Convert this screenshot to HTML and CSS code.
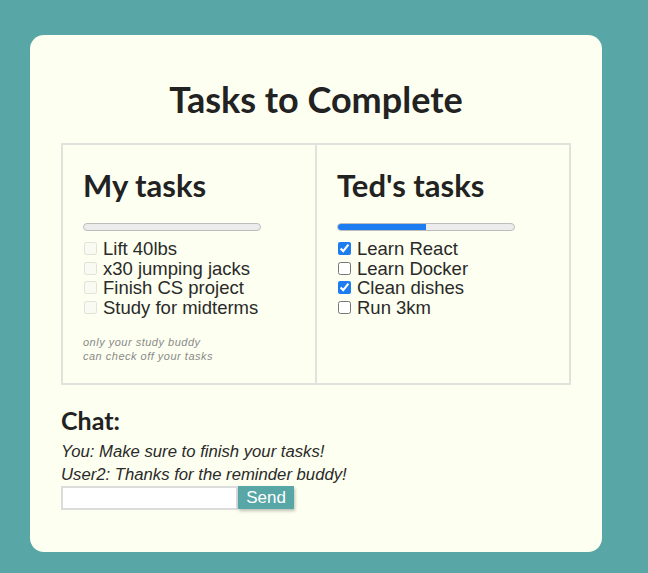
FILE: index.html
```html
<!DOCTYPE html>
<html lang="en">
<head>
  <meta charset="UTF-8">
  <title>Tasks to Complete</title>
  <link rel="stylesheet" href="styles.css">
</head>
<body>

  <div class="card">
    <h1>Tasks to Complete</h1>

    <div class="lists">
      <div class="list">
        <h2>My tasks</h2>
        <div class="bar"><div class="bar-fill" style="width: 0%"></div></div>
        <label class="task"><input type="checkbox" disabled> Lift 40lbs</label>
        <label class="task"><input type="checkbox" disabled> x30 jumping jacks</label>
        <label class="task"><input type="checkbox" disabled> Finish CS project</label>
        <label class="task"><input type="checkbox" disabled> Study for midterms</label>
        <p class="note">only your study buddy<br>can check off your tasks</p>
      </div>

      <div class="list">
        <h2>Ted's tasks</h2>
        <div class="bar"><div class="bar-fill" style="width: 50%"></div></div>
        <label class="task"><input type="checkbox" checked> Learn React</label>
        <label class="task"><input type="checkbox"> Learn Docker</label>
        <label class="task"><input type="checkbox" checked> Clean dishes</label>
        <label class="task"><input type="checkbox"> Run 3km</label>
      </div>
    </div>

    <div class="chat">
      <h3>Chat:</h3>
      <p class="msg">You: Make sure to finish your tasks!</p>
      <p class="msg">User2: Thanks for the reminder buddy!</p>
      <div class="send-row">
        <input type="text" class="chat-input">
        <button class="send">Send</button>
      </div>
    </div>
  </div>

</body>
</html>
```

FILE: styles.css
```css
body { margin: 0; background: #58a6a6; font-family: "Liberation Sans", Arial, sans-serif; color: #222; padding: 35px 46px 20px 30px; }
.card { background: #fdfff0; border-radius: 14px; padding: 43px 31px 42px 31px; }
h1 { font-family: Lato, sans-serif; font-weight: 700; font-size: 36px; line-height: 42px; text-align: center; margin: 0 0 23px 0; color: #222; }

.lists { display: flex; }
.list { flex: 1; border: 2px solid #e2e2dc; padding: 22px 20px 20px 20px; }
.list + .list { border-left: none; }
.list h2 { font-family: Lato, sans-serif; font-weight: 700; font-size: 31px; line-height: 36px; margin: 0 0 20px 0; color: #222; }

/* progress bar */
.bar { width: 176px; height: 6px; border: 1px solid #bdbdbd; border-radius: 5px; background: #ececec; overflow: hidden; margin-bottom: 8px; }
.bar-fill { height: 100%; background: #1c7cf0; }

.task { display: flex; align-items: center; font-size: 18.5px; line-height: 19.5px; color: #2a2a2a; }
.task input { width: 13px; height: 13px; margin: 0 6px 0 1px; accent-color: #1c7cf0; }
.task input:disabled { opacity: 0.6; }

.note { font-style: italic; font-size: 11px; line-height: 14px; color: #8a8a8a; letter-spacing: 0.5px; margin: 18px 0 0 0; }

.chat h3 { font-family: Lato, sans-serif; font-weight: 700; font-size: 25px; line-height: 29px; margin: 21px 0 5px 0; color: #222; }
.msg { font-style: italic; font-size: 16.7px; line-height: 23px; margin: 0; color: #2a2a2a; }
.send-row { display: flex; }
.chat-input { width: 177px; height: 24px; box-sizing: border-box; border: 2px solid #dcdcdc; background: #fff; padding: 2px 4px; }
.send { background: #58a6a6; color: #fff; border: none; font-family: "Liberation Sans", Arial, sans-serif; font-size: 17px; width: 56px; height: 23px; padding: 0; box-shadow: 1px 2px 3px rgba(0,0,0,0.25); cursor: pointer; }
```
